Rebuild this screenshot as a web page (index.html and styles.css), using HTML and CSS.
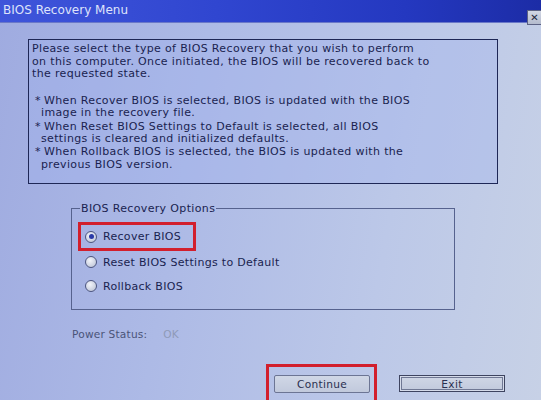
FILE: index.html
```html
<!DOCTYPE html>
<html>
<head>
<meta charset="utf-8">
<link rel="stylesheet" href="styles.css">
</head>
<body>
<div class="screen">
  <div class="titlebar">
    <span class="title">BIOS Recovery Menu</span>
    <span class="close">&#x2715;</span>
  </div>
  <div class="content">
    <div class="desc">
      <p class="intro">Please select the type of BIOS Recovery that you wish to perform<br>on this computer. Once initiated, the BIOS will be recovered back to<br>the requested state.</p>
      <ul class="notes">
        <li>When Recover BIOS is selected, BIOS is updated with the BIOS<br>image in the recovery file.</li>
        <li>When Reset BIOS Settings to Default is selected, all BIOS<br>settings is cleared and initialized defaults.</li>
        <li>When Rollback BIOS is selected, the BIOS is updated with the<br>previous BIOS version.</li>
      </ul>
    </div>
    <fieldset class="options">
      <legend>BIOS Recovery Options</legend>
      <div class="opt hl"><span class="radio on"></span>Recover BIOS</div>
      <div class="opt"><span class="radio"></span>Reset BIOS Settings to Default</div>
      <div class="opt"><span class="radio"></span>Rollback BIOS</div>
    </fieldset>
    <div class="power"><span class="plabel">Power Status:</span><span class="pval">OK</span></div>
    <div class="buttons">
      <span class="btnwrap"><span class="btn cont">Continue</span></span>
      <span class="btn exit">Exit</span>
    </div>
  </div>
</div>
</body>
</html>
```
FILE: styles.css
```css
html, body {
  margin: 0;
  padding: 0;
}
body {
  width: 541px;
  height: 400px;
  overflow: hidden;
  font-family: "DejaVu Sans", Verdana, sans-serif;
}
.screen {
  width: 541px;
  height: 400px;
  overflow: hidden;
  display: flex;
  flex-direction: column;
  background: linear-gradient(100deg, #9fabe0 0%, #adbae6 35%, #bcc8e8 70%, #c7d1e6 100%);
  color: #1a1f50;
}
.titlebar {
  height: 22px;
  flex: none;
  display: flex;
  justify-content: space-between;
  align-items: flex-start;
  background: linear-gradient(90deg, #3f55da 0%, #3046d0 40%, #2438c0 75%, #1c2ca6 100%);
  box-shadow: 0 1px 0 #6a78c8;
}
.title {
  font-size: 12px;
  color: #dfe3fb;
  padding: 3px 0 0 3px;
}
.close {
  width: 13px;
  height: 13px;
  margin-top: 10px;
  background: linear-gradient(180deg, #d2d7e4 0%, #b4bbce 100%);
  border: 1px solid #5c6284;
  border-right: none;
  color: #22263e;
  font-size: 10px;
  line-height: 13px;
  text-align: center;
  font-weight: bold;
}
.content {
  flex: 1;
  display: flex;
  flex-direction: column;
}
.desc {
  margin: 17px 0 0 28px;
  width: 470px;
  height: 145px;
  border: 1px solid #1e2756;
  background: rgba(160, 178, 238, 0.35);
  font-size: 11px;
  letter-spacing: 0.35px;
  line-height: 12.6px;
  padding: 3px 0 0 3px;
  box-sizing: border-box;
}
.intro {
  margin: 0;
}
.notes {
  list-style: none;
  margin: 14px 0 0 0;
  padding: 0;
}
.notes li {
  padding-left: 9px;
  text-indent: -6px;
  margin-bottom: 0.6px;
}
.notes li::before {
  content: "*";
  display: inline-block;
  width: 9px;
  text-indent: 0;
}
.options {
  margin: 18px 0 0 71px;
  width: 384px;
  height: 108px;
  box-sizing: border-box;
  border: 1px solid #56628e;
  padding: 7px 0 0 6px;
  display: flex;
  flex-direction: column;
  gap: 0;
}
.options legend {
  font-size: 11px;
  letter-spacing: 0.35px;
  padding: 0 1px;
  margin-left: 2px;
}
.opt {
  display: flex;
  align-items: center;
  gap: 6px;
  font-size: 11px;
  letter-spacing: 0.3px;
  height: 24px;
  padding: 0 4px;
  width: fit-content;
  box-sizing: border-box;
  border: 3px solid transparent;
}
.opt.hl {
  border-color: #d21f2d;
  padding: 0 12px 0 4px;
  height: 29px;
  margin-bottom: -1px;
}
.radio {
  width: 10px;
  height: 10px;
  border-radius: 50%;
  border: 1px solid #4d5680;
  background: radial-gradient(circle at 40% 35%, #f2f4fa 0%, #c8cede 70%, #a9b0c8 100%);
  position: relative;
  flex: none;
}
.radio.on::after {
  content: "";
  position: absolute;
  left: 2.5px;
  top: 2.5px;
  width: 5px;
  height: 5px;
  border-radius: 50%;
  background: #2a3aa8;
}
.power {
  margin: 18px 0 0 72px;
  font-size: 10.6px;
  letter-spacing: 0.2px;
  display: flex;
  gap: 16px;
}
.plabel {
  color: #4a5478;
}
.pval {
  color: #8f9ab8;
}
.buttons {
  margin-top: 35px;
  display: flex;
  justify-content: flex-end;
  align-items: flex-start;
  gap: 22px;
  padding-right: 36px;
}
.btnwrap {
  border: 3px solid #d21f2d;
  border-bottom: none;
  padding: 8px 4px 10px 5px;
  margin-top: -11px;
}
.btn {
  display: flex;
  align-items: center;
  justify-content: center;
  height: 18px;
  box-sizing: border-box;
  font-size: 10.6px;
  letter-spacing: 0.3px;
  color: #2a3050;
  background: linear-gradient(180deg, #d0d7e6 0%, #c1c9dc 100%);
}
.cont {
  width: 96px;
  border: 1px solid #6c7594;
  border-radius: 2px;
}
.exit {
  width: 106px;
  height: 17px;
  border: 1px solid #3e4460;
  box-shadow: inset 0 0 0 1px #d5dbea, inset 0 0 0 2px #707894;
}
```
